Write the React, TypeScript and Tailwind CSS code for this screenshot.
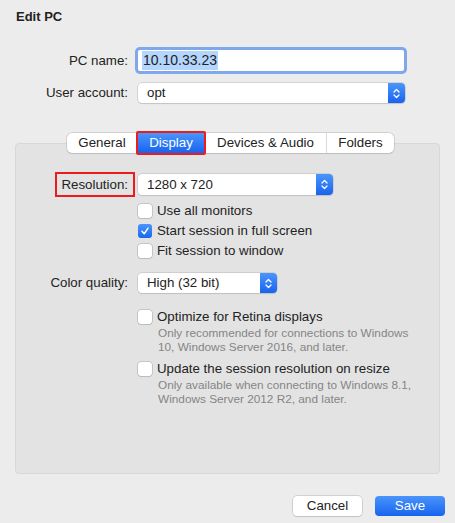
import React, { FC, ReactNode } from 'react'

const Stepper: FC = () => (
  <div className="flex h-full w-[17px] items-center justify-center rounded-r-[4px] bg-gradient-to-b from-[#4b95fb] to-[#1763ef]">
    <svg width="9" height="13" viewBox="0 0 9 13" fill="none">
      <path d="M2 5 L4.5 2.5 L7 5" stroke="white" strokeWidth="1.3" strokeLinecap="round" strokeLinejoin="round" />
      <path d="M2 8 L4.5 10.5 L7 8" stroke="white" strokeWidth="1.3" strokeLinecap="round" strokeLinejoin="round" />
    </svg>
  </div>
)

const Popup: FC<{ value: string; width: string; height: string }> = ({ value, width, height }) => (
  <div
    className={`flex ${width} ${height} items-stretch rounded-[4px] bg-white shadow-[0_0_0_0.5px_#b9b9b9,0_1px_1px_rgba(0,0,0,0.12)]`}
  >
    <span className="flex flex-1 items-center pl-[9px] text-[13.3px] text-[#222]">{value}</span>
    <Stepper />
  </div>
)

const Checkbox: FC<{ checked?: boolean }> = ({ checked }) =>
  checked ? (
    <span className="flex h-[14px] w-[14px] items-center justify-center rounded-[3px] bg-gradient-to-b from-[#4b95fb] to-[#1965ef]">
      <svg width="10" height="10" viewBox="0 0 10 10" fill="none">
        <path d="M2 5.3 L4.2 7.8 L8 2.2" stroke="white" strokeWidth="1.5" strokeLinecap="round" strokeLinejoin="round" />
      </svg>
    </span>
  ) : (
    <span className="h-[14px] w-[14px] rounded-[3px] bg-white shadow-[0_0_0_0.5px_#a9a9a9,0_1px_1px_rgba(0,0,0,0.1)]" />
  )

const CheckRow: FC<{ label: string; checked?: boolean; className?: string }> = ({ label, checked, className }) => (
  <div className={`flex items-center gap-[5px] pl-[122px] ${className ?? 'h-[20px]'}`}>
    <Checkbox checked={checked} />
    <span className="text-[13.3px] text-[#222]">{label}</span>
  </div>
)

const Hint: FC<{ children: ReactNode }> = ({ children }) => (
  <div className="pl-[142px] text-[11.8px] leading-[14px] text-[#858585]">{children}</div>
)

const TABS = ['General', 'Display', 'Devices & Audio', 'Folders']
const TAB_WIDTHS = ['w-[70px]', 'w-[68px]', 'w-[121px]', 'w-[68px]']

export default function App() {
  return (
    <div
      className="flex h-[523px] w-[455px] flex-col bg-[#ececec] text-[#222]"
      style={{ fontFamily: '"Liberation Sans", Arial, sans-serif' }}
    >
      <div className="pl-[16px] pt-[9px] text-[13px] font-bold leading-[16px]">Edit PC</div>

      {/* top form */}
      <div className="mt-[25px] flex h-[21px] items-center">
        <span className="w-[128px] text-right text-[13.3px]">PC name:</span>
        <div className="ml-[10px] flex h-[21px] w-[266px] items-center rounded-[2px] bg-white pl-[4px] shadow-[0_0_0_3px_#7ea8ea]">
          <span className="bg-[#b4d5fd] px-[1px] text-[14px] leading-[19px]">10.10.33.23</span>
        </div>
      </div>
      <div className="mt-[12px] flex h-[20px] items-center">
        <span className="w-[128px] text-right text-[13.3px]">User account:</span>
        <div className="ml-[10px]">
          <Popup value="opt" width="w-[267px]" height="h-[20px]" />
        </div>
      </div>

      {/* tabs */}
      <div className="relative z-10 mt-[30px] -mb-[10px] flex pl-[67px]">
        <div className="flex h-[20px] rounded-[5px] bg-white shadow-[0_0_0_0.5px_#b5b5b5,0_1px_1px_rgba(0,0,0,0.12)]">
          {TABS.map((t, i) => (
            <div
              key={t}
              className={`relative flex items-center justify-center text-[13.3px] ${TAB_WIDTHS[i]} ${
                t === 'Display'
                  ? 'bg-gradient-to-b from-[#4a94fb] to-[#1763ef] text-white'
                  : i > 0 && TABS[i - 1] !== 'Display'
                    ? 'border-l border-[#dadada]'
                    : ''
              }`}
            >
              {t}
              {t === 'Display' && (
                <span className="absolute -inset-x-[1px] -inset-y-[2px] rounded-[2px] border-2 border-[#ec1c1c]" />
              )}
            </div>
          ))}
        </div>
      </div>

      {/* panel */}
      <div className="mx-[15px] h-[331px] rounded-[4px] border border-[#d8d8d8] bg-[#e3e3e3] pt-[28px]">
        <div className="flex h-[25px] items-center">
          <div className="flex w-[112px] justify-end">
            <span className="-mr-[7px] flex h-[25px] items-center border-2 border-[#ec1c1c] pl-[4px] pr-[5px] text-[13.3px]">
              Resolution:
            </span>
          </div>
          <div className="ml-[10px]">
            <Popup value="1280 x 720" width="w-[195px]" height="h-[21px]" />
          </div>
        </div>

        <CheckRow label="Use all monitors" className="mt-[4px] h-[20px]" />
        <CheckRow label="Start session in full screen" checked />
        <CheckRow label="Fit session to window" />

        <div className="mt-[12px] flex h-[20px] items-center">
          <span className="w-[112px] text-right text-[13.3px]">Color quality:</span>
          <div className="ml-[10px]">
            <Popup value="High (32 bit)" width="w-[139px]" height="h-[20px]" />
          </div>
        </div>

        <CheckRow label="Optimize for Retina displays" className="mt-[15px] h-[18px]" />
        <Hint>
          Only recommended for connections to Windows
          <br />
          10, Windows Server 2016, and later.
        </Hint>

        <CheckRow label="Update the session resolution on resize" className="mt-[6px] h-[18px]" />
        <Hint>
          Only available when connecting to Windows 8.1,
          <br />
          Windows Server 2012 R2, and later.
        </Hint>
      </div>

      {/* buttons */}
      <div className="mr-[10px] mt-[22px] flex justify-end gap-[13px]">
        <button className="flex h-[20px] w-[69px] items-center justify-center rounded-[4px] bg-white text-[13.3px] text-[#222] shadow-[0_0_0_0.5px_#b5b5b5,0_1px_1px_rgba(0,0,0,0.12)]">
          Cancel
        </button>
        <button className="flex h-[20px] w-[70px] items-center justify-center rounded-[4px] bg-gradient-to-b from-[#4a94fb] to-[#1763ef] text-[13.3px] text-white">
          Save
        </button>
      </div>
    </div>
  )
}
